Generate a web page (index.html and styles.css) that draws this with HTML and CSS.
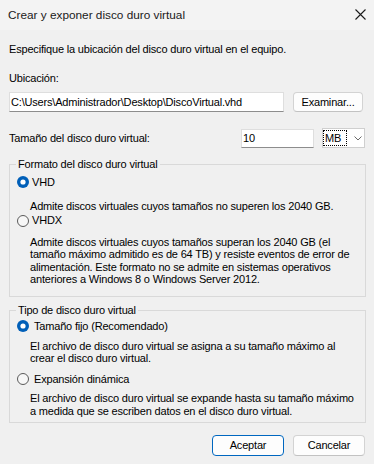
FILE: index.html
```html
<!DOCTYPE html>
<html lang="es">
<head>
<meta charset="utf-8">
<title>Crear y exponer disco duro virtual</title>
<link rel="stylesheet" href="styles.css">
</head>
<body>
<div class="dialog">
  <div class="titlebar">
    <span class="title">Crear y exponer disco duro virtual</span>
    <svg class="close" width="11" height="11" viewBox="0 0 11 11"><path d="M0.5 0.5 L10.5 10.5 M10.5 0.5 L0.5 10.5" stroke="#1a1a1a" stroke-width="1.1" fill="none"/></svg>
  </div>
  <div class="content">
    <div class="intro">Especifique la ubicación del disco duro virtual en el equipo.</div>
    <div class="loc-label">Ubicación:</div>
    <div class="path-row">
      <div class="textbox path-input">C:\Users\Administrador\Desktop\DiscoVirtual.vhd</div>
      <div class="btn">Examinar...</div>
    </div>
    <div class="size-row">
      <div class="size-label">Tamaño del disco duro virtual:</div>
      <div class="textbox size-input">10</div>
      <div class="combo">
        <span class="focus">MB</span>
        <svg class="chev" width="8" height="5" viewBox="0 0 8 5"><path d="M0.5 0.5 L4 4 L7.5 0.5" stroke="#6a6a6a" stroke-width="1" fill="none"/></svg>
      </div>
    </div>

    <fieldset class="group group-format">
      <legend>Formato del disco duro virtual</legend>
      <div class="radio r-first">
        <svg class="rb" width="12" height="12" viewBox="0 0 12 12"><circle cx="6" cy="6" r="6" fill="#005fb8"/><circle cx="6" cy="6" r="2.6" fill="#fff"/></svg>
        <span class="rlabel">VHD</span>
      </div>
      <div class="desc d-vhd">Admite discos virtuales cuyos tamaños no superen los 2040 GB.</div>
      <div class="radio r-vhdx">
        <svg class="rb" width="12" height="12" viewBox="0 0 12 12"><circle cx="6" cy="6" r="5.5" fill="#f7f7f7" stroke="#5a5a5a" stroke-width="1"/></svg>
        <span class="rlabel">VHDX</span>
      </div>
      <div class="desc d-vhdx">Admite discos virtuales cuyos tamaños superan los 2040 GB (el<br>tamaño máximo admitido es de 64 TB) y resiste eventos de error de<br>alimentación. Este formato no se admite en sistemas operativos<br>anteriores a Windows 8 o Windows Server 2012.</div>
    </fieldset>

    <fieldset class="group group-type">
      <legend>Tipo de disco duro virtual</legend>
      <div class="radio r-fixed">
        <svg class="rb" width="12" height="12" viewBox="0 0 12 12"><circle cx="6" cy="6" r="6" fill="#005fb8"/><circle cx="6" cy="6" r="2.6" fill="#fff"/></svg>
        <span class="rlabel wide">Tamaño fijo (Recomendado)</span>
      </div>
      <div class="desc d-fixed">El archivo de disco duro virtual se asigna a su tamaño máximo al<br>crear el disco duro virtual.</div>
      <div class="radio r-dyn">
        <svg class="rb" width="12" height="12" viewBox="0 0 12 12"><circle cx="6" cy="6" r="5.5" fill="#f7f7f7" stroke="#5a5a5a" stroke-width="1"/></svg>
        <span class="rlabel wide">Expansión dinámica</span>
      </div>
      <div class="desc d-dyn">El archivo de disco duro virtual se expande hasta su tamaño máximo<br>a medida que se escriben datos en el disco duro virtual.</div>
    </fieldset>

    <div class="buttons">
      <div class="btn btn-main default">Aceptar</div>
      <div class="btn btn-main">Cancelar</div>
    </div>
  </div>
</div>
</body>
</html>
```
FILE: styles.css
```css
* { box-sizing: border-box; }
html, body { margin: 0; padding: 0; }
body {
  width: 374px;
  height: 464px;
  overflow: hidden;
  background: #f0f0f0;
  color: #000;
  font-family: "Liberation Sans", Arial, sans-serif;
  font-size: 11px;
  letter-spacing: -0.18px;
  line-height: 12.6px;
}
.dialog { width: 374px; height: 464px; }
.titlebar {
  height: 30px;
  background: #f3f3f3;
  display: flex;
  align-items: center;
  justify-content: space-between;
  padding: 0 8px 0 8px;
  font-size: 11.8px;
  letter-spacing: 0;
  line-height: normal;
  color: #1a1a1a;
}
.close { display: block; margin-top: -1px; }
.content { padding: 0 8px 0 9px; white-space: nowrap; }
.intro { margin-top: 12.5px; }
.loc-label { margin-top: 17.4px; }
.path-row { display: flex; margin-top: 6.9px; height: 20px; }
.textbox {
  background: #fff;
  border: 1px solid #dedede;
  border-bottom-color: #8d8d8d;
  display: flex;
  align-items: center;
}
.path-input { width: 275px; height: 20px; padding-left: 1px; }
.btn {
  display: flex;
  align-items: center;
  justify-content: center;
  background: #fdfdfd;
  border: 1px solid #d3d3d3;
  border-bottom-color: #c2c2c2;
  border-radius: 4px;
}
.path-row .btn { width: 70px; height: 20px; margin-left: 9px; }
.size-row {
  display: flex;
  align-items: center;
  height: 19px;
  margin-top: 17px;
}
.size-label { flex: 1; }
.size-input { width: 73px; height: 19px; padding-left: 1px; }
.combo {
  width: 43px;
  height: 20px;
  margin-left: 8px;
  margin-right: 1px;
  background: #fff;
  border: 1px solid #cfcfcf;
  display: flex;
  align-items: center;
}
.focus {
  display: flex;
  align-items: center;
  height: 16px;
  width: 24px;
  padding-left: 1px;
  border: 1px dotted #000;
}
.chev { display: block; margin-left: 7px; }
.group {
  margin: 0;
  padding: 0 0 10px 0;
  border: 1px solid #d9d9d9;
  min-width: 0;
  width: 357px;
}
.group legend {
  margin-left: 6px;
  padding: 0 2px;
  line-height: 12.6px;
}
.group-format { margin-top: 10.2px; }
.group-type { margin-top: 7.6px; padding-bottom: 4.9px; }
.radio {
  display: flex;
  align-items: center;
  height: 12.6px;
  margin-left: 7px;
}
.rb { display: block; flex: none; }
.rlabel { margin-left: 3px; }
.rlabel.wide { margin-left: 5px; }
.desc { margin-left: 20px; }
.r-first { margin-top: 5.4px; }
.d-vhd { margin-top: 10.8px; }
.r-vhdx { margin-top: 2.2px; }
.d-vhdx { margin-top: 8.6px; }
.r-fixed { margin-top: 2.7px; }
.d-fixed { margin-top: 7.3px; }
.r-dyn { margin-top: 8.1px; }
.d-dyn { margin-top: 6.4px; }
.buttons {
  display: flex;
  justify-content: flex-end;
  gap: 9px;
  margin-top: 11.7px;
  padding-right: 1px;
}
.btn-main { width: 72px; height: 21px; }
.btn-main.default { border-color: #0067c0; }
```
